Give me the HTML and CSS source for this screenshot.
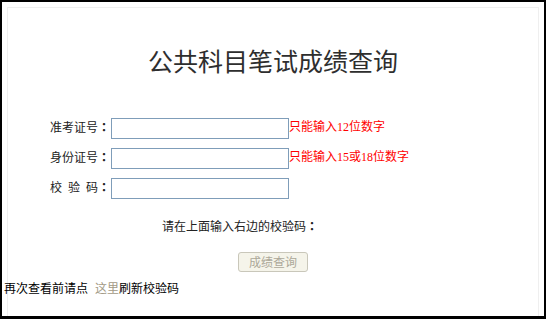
FILE: index.html
```html
<html>
	<head>
	<meta charset="utf-8">
	<link rel="stylesheet" href="styles.css">
	</head>
	<body>
		<div class="frame">
			<div class="panel">
				<h2 class="title">公共科目笔试成绩查询</h2>
				<form class="query">
					<label>准考证号<span class="colon">：</span></label>
					<input type="text" id="txtzkz">
					<span class="tip">只能输入12位数字</span>

					<label>身份证号<span class="colon">：</span></label>
					<input type="text" id="txtsfz">
					<span class="tip">只能输入15或18位数字</span>

					<label class="spaced">校 验 码<span class="colon">：</span></label>
					<input type="text" id="txtcode">
					<span></span>
				</form>
				<div class="hint">请在上面输入右边的校验码<span class="colon">：</span></div>
				<div class="actions">
					<button type="button" id="button" disabled>成绩查询</button>
				</div>
				<div class="footer">再次查看前请点 <a href="#">这里</a>刷新校验码</div>
			</div>
		</div>
	</body>
</html>
```

FILE: styles.css
```css
*{
	margin:0px;
	padding:0px;
}
html, body{
	height: 100%;
}
body{
	background: white;
	font-family: "Liberation Serif", "Noto Sans CJK SC", serif;
	font-size: 12px;
	color: #222222;
}
.frame{
	height: 319px;
	box-sizing: border-box;
	border: 2px solid #000000;
	border-bottom-width: 3px;
	display: flex;
	flex-direction: column;
}
.panel{
	flex: 1;
	margin: 5px 5px 0px 5px;
	border: 1px solid #efefef;
	border-bottom: none;
}
.title{
	margin-top: 37px;
	font-family: "Noto Sans CJK SC", sans-serif;
	font-size: 25px;
	font-weight: normal;
	line-height: 30px;
	color: #2e2e2e;
	text-align: center;
}
.colon{
	font-family: "Noto Sans CJK JP", sans-serif;
	font-weight: bold;
	line-height: 0px;
}
.query{
	margin-top: 43px;
	display: grid;
	grid-template-columns: 103px 178px auto;
	grid-auto-rows: 21px;
	row-gap: 9px;
	align-items: center;
}
.query label{
	padding-right: 1px;
	text-align: right;
	line-height: 21px;
	height: 21px;
}
.query label.spaced{
	word-spacing: 3px;
}
.query input{
	width: 178px;
	height: 21px;
	box-sizing: border-box;
	border: 1px solid #7f9db9;
	padding: 0px 3px;
	font-size: 12px;
	outline: none;
}
.tip{
	color: #ff0000;
	line-height: 21px;
	margin-top: -3px;
}
.hint{
	margin-top: 18px;
	padding-left: 154px;
	line-height: 20px;
	height: 20px;
}
.actions{
	margin-top: 15px;
	text-align: center;
	height: 20px;
}
#button{
	width: 70px;
	height: 20px;
	font-family: "Noto Sans CJK SC", sans-serif;
	font-size: 12px;
	line-height: 18px;
	color: #aca899;
	background: #f5f4ea;
	border: 1px solid #c9c7ba;
	border-radius: 3px;
}
.footer{
	margin-top: 8px;
	margin-left: -4px;
	line-height: 18px;
	color: #000000;
	word-spacing: 4px;
}
.footer a{
	color: #a39a86;
	text-decoration: none;
}
```
